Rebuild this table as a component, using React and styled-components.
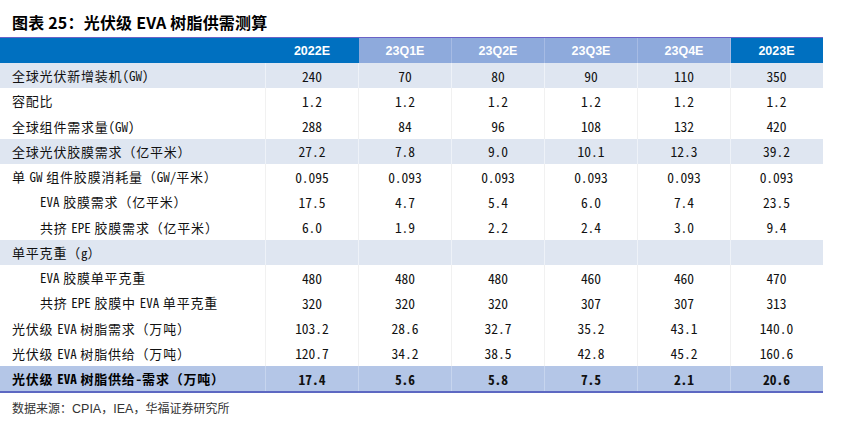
import React from "react";
import styled, { createGlobalStyle } from "styled-components";

const Global = createGlobalStyle`
  html, body { margin: 0; padding: 0; background: #fff; }
  body { font-family: "Noto Sans CJK SC", "Liberation Sans", sans-serif; color: #000; }
`;

const Page = styled.div`
  width: 844px;
  height: 422px;
  overflow: hidden;
  display: flex;
  flex-direction: column;
`;

const Title = styled.h1`
  margin: 0;
  padding: 12px 0 0 12px;
  height: 25px;
  font-family: "Noto Sans CJK SC", sans-serif;
  font-weight: 700;
  font-size: 16px;
  line-height: 20px;
  letter-spacing: 0.2px;
  color: #000;
`;

const Table = styled.div`
  width: 823px;
  border-top: 1px solid #6b62c6;
  border-bottom: 2px solid #5d68c2;
  display: flex;
  flex-direction: column;
`;

const Row = styled.div`
  display: grid;
  grid-template-columns: 266px repeat(5, 93px) 92px;
  height: ${(p) => p.$h || 25.25}px;
  background: ${(p) => (p.$bg ? p.$bg : "#fff")};
`;

const HeadCell = styled.div`
  display: flex;
  align-items: center;
  justify-content: center;
  background: ${(p) => (p.$light ? "#8eaadc" : "#0070c0")};
  border-right: 1px solid ${(p) => (p.$light ? "#a6bbe4" : "transparent")};
  color: #fff;
  font-family: "Liberation Sans", Arial, sans-serif;
  font-weight: 700;
  font-size: 12.5px;
`;

const Label = styled.div`
  display: flex;
  align-items: center;
  padding-left: ${(p) => (p.$indent ? 40 : 12)}px;
  font-family: "Noto Sans CJK SC", sans-serif;
  font-size: 13px;
  letter-spacing: 0.8px;
  font-weight: ${(p) => (p.$bold ? 700 : 400)};
  color: ${(p) => (p.$bold ? "#000" : "#111")};
  white-space: pre;
  border-right: 1px solid ${(p) => p.$line || "transparent"};
`;

const LabelText = styled.span`
  white-space: pre;
`;

const Latin = styled.span`
  font-family: "Noto Sans Mono CJK SC", "DejaVu Sans Mono", monospace;
  letter-spacing: 0;
  font-size: 13px;
`;

const Cell = styled.div`
  display: flex;
  align-items: center;
  justify-content: center;
  font-family: "Noto Sans Mono CJK SC", "DejaVu Sans Mono", monospace;
  font-size: 13.5px;
  color: #111;
  font-weight: ${(p) => (p.$bold ? 700 : 400)};
  border-right: 1px solid ${(p) => p.$line || "transparent"};
`;

const Source = styled.div`
  padding: 7px 0 0 12px;
  font-family: "Noto Sans CJK SC", sans-serif;
  font-size: 12px;
  line-height: 16px;
  color: #333;
  letter-spacing: 0;
`;

const SourceLatin = styled.span`
  font-family: "Liberation Sans", Arial, sans-serif;
  font-size: 12.5px;
`;

const heads = ["2022E", "23Q1E", "23Q2E", "23Q3E", "23Q4E", "2023E"];

const rows = [
  { label: "全球光伏新增装机(GW)", vals: ["240", "70", "80", "90", "110", "350"], band: true },
  { label: "容配比", vals: ["1.2", "1.2", "1.2", "1.2", "1.2", "1.2"] },
  { label: "全球组件需求量(GW)", vals: ["288", "84", "96", "108", "132", "420"] },
  { label: "全球光伏胶膜需求（亿平米）", vals: ["27.2", "7.8", "9.0", "10.1", "12.3", "39.2"], band: true },
  { label: "单 GW 组件胶膜消耗量（GW/平米）", vals: ["0.095", "0.093", "0.093", "0.093", "0.093", "0.093"] },
  { label: "EVA 胶膜需求（亿平米）", vals: ["17.5", "4.7", "5.4", "6.0", "7.4", "23.5"], indent: true },
  { label: "共挤 EPE 胶膜需求（亿平米）", vals: ["6.0", "1.9", "2.2", "2.4", "3.0", "9.4"], indent: true },
  { label: "单平克重（g）", vals: ["", "", "", "", "", ""], band: true },
  { label: "EVA 胶膜单平克重", vals: ["480", "480", "480", "460", "460", "470"], indent: true },
  { label: "共挤 EPE 胶膜中 EVA 单平克重", vals: ["320", "320", "320", "307", "307", "313"], indent: true },
  { label: "光伏级 EVA 树脂需求（万吨）", vals: ["103.2", "28.6", "32.7", "35.2", "43.1", "140.0"] },
  { label: "光伏级 EVA 树脂供给（万吨）", vals: ["120.7", "34.2", "38.5", "42.8", "45.2", "160.6"] },
  { label: "光伏级 EVA 树脂供给-需求（万吨）", vals: ["17.4", "5.6", "5.8", "7.5", "2.1", "20.6"], total: true },
];

function renderLabel(text) {
  const parts = text.split(/([A-Za-z()/\-]+)/g);
  return parts.map((p, i) =>
    /^[A-Za-z()/\-]+$/.test(p) ? <Latin key={i}>{p}</Latin> : <React.Fragment key={i}>{p}</React.Fragment>
  );
}

export default function App() {
  return (
    <Page>
      <Global />
      <Title>图表 25：光伏级 EVA 树脂供需测算</Title>
      <Table>
        <Row $h={25}>
          <HeadCell />
          {heads.map((h, i) => (
            <HeadCell key={h} $light={i > 0 && i < 5}>{h}</HeadCell>
          ))}
        </Row>
        {rows.map((r, ri) => {
          const bg = r.total ? "#b4c6e7" : r.band ? "#dfe6f1" : "#fff";
          const line = r.total ? "#c7d5ee" : r.band ? "#eef2f8" : "#f1f1f1";
          return (
            <Row key={ri} $bg={bg}>
              <Label $indent={r.indent} $bold={r.total} $line={line}>
                <LabelText>{renderLabel(r.label)}</LabelText>
              </Label>
              {r.vals.map((v, vi) => (
                <Cell key={vi} $bold={r.total} $line={vi < 5 ? line : "transparent"}>
                  {v}
                </Cell>
              ))}
            </Row>
          );
        })}
      </Table>
      <Source>
        数据来源：<SourceLatin>CPIA</SourceLatin>，<SourceLatin>IEA</SourceLatin>，华福证券研究所
      </Source>
    </Page>
  );
}
